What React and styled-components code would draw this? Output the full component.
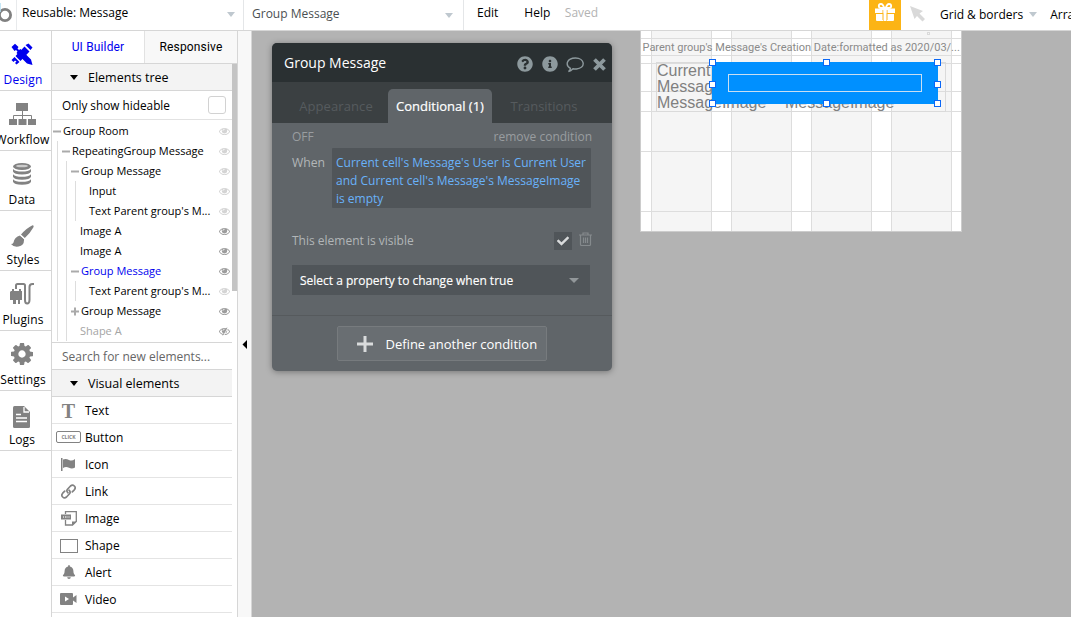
import React from "react";
import styled, { createGlobalStyle, css } from "styled-components";
import { FaBell, FaQuestionCircle, FaInfoCircle, FaCheck } from "react-icons/fa";

const Global = createGlobalStyle`
  * { box-sizing: border-box; }
  body { margin: 0; overflow: hidden; font-family: "Open Sans", sans-serif; font-size: 12px; color: #000; }
  svg { display: block; flex: none; }
`;

const Page = styled.div`
  width: 1071px; height: 617px; display: flex; flex-direction: column;
  background: #fff; overflow: hidden; white-space: nowrap;
`;

/* top bar */
const TopBar = styled.header`
  height: 31px; flex: none; display: flex; border-bottom: 1px solid #d6d6d6; overflow: hidden;
`;
const LogoCell = styled.div`width: 17px; border-right: 1px solid #e8eaec;`;
const Picker = styled.div`
  width: ${(p) => p.$w}px; height: 30px; display: flex; align-items: center; justify-content: space-between;
  padding: 0 ${(p) => p.$pr}px 0 ${(p) => p.$pl}px; border-right: 1px solid #e4e6e8;
  color: ${(p) => p.$color || "#000"};
  line-height: 26px;
  span { margin-top: ${(p) => p.$top}px; }
`;
const Caret = styled.i`
  width: 0; height: 0; margin-top: ${(p) => p.$mt || 0}px; margin-left: ${(p) => p.$ml || 0}px;
  border: ${(p) => p.$s || 4}px solid transparent; border-bottom: 0;
  border-top: ${(p) => p.$h || 5}px solid ${(p) => p.$c || "#bfc8cf"};
`;
const MenuItem = styled.span`
  margin-left: ${(p) => p.$ml}px; line-height: ${(p) => p.$lh || 26}px; color: ${(p) => p.$c || "#000"};
`;
const GiftBox = styled.div`
  width: 32px; height: 30px; margin-left: auto; padding: 3px 0 0 5px; background: #fcb415;
`;
const RightTools = styled.div`
  width: 170px; display: flex; align-items: center; height: 30px;
`;
const Pointer = styled.svg`margin: -2px 0 0 9px;`;

const Main = styled.div`flex: 1; min-height: 0; display: flex;`;

/* left rail */
const Rail = styled.nav`
  width: 52px; flex: none; border-right: 1px solid #d6d6d6; overflow: hidden;
`;
const RailItem = styled.div`
  height: 60px; border-bottom: 1px solid #d6d6d6;
  display: flex; flex-direction: column; align-items: center;
  padding: ${(p) => p.$pt}px 7px 0 0; color: ${(p) => (p.$on ? "#00e" : "#000")};
`;
const RailIcon = styled.div`height: ${(p) => p.$h}px; color: ${(p) => (p.$on ? "#00e" : "#828282")};`;
const RailLabel = styled.span`line-height: 17px; font-size: 12px; letter-spacing: .12px; padding-left: ${(p) => p.$dx || 0}px;`;

/* side panel */
const Side = styled.aside`
  width: 186px; flex: none; border-right: 1px solid #d6d6d6; display: flex; flex-direction: column;
`;
const Tabs = styled.div`display: flex; height: 33px; flex: none; border-bottom: 1px solid #d6d6d6;`;
const Tab = styled.div`
  width: ${(p) => p.$w}px; text-align: center; font: 12px/32px Roboto, sans-serif; letter-spacing: .15px;
  color: ${(p) => (p.$on ? "#00e" : "#000")}; background: ${(p) => (p.$on ? "#fff" : "#f8f8f8")};
  ${(p) => !p.$on && css`border-left: 1px solid #e2e2e2;`}
`;
const Scrollable = styled.div`display: flex; height: 278px; flex: none;`;
const List = styled.div`width: 180px; flex: none;`;
const Thumb = styled.div`width: 5px; height: 227px; background: #c4c4c4;`;
const SectionHead = styled.div`
  height: 27px; background: #f3f3f3; border-bottom: 1px solid #d6d6d6; display: flex; align-items: center;
  padding-left: 18px; gap: 10px; font-size: 12.5px; line-height: 17px;
`;
const HideRow = styled.div`
  height: 29px; border-bottom: 1px solid #e2e2e2; display: flex; align-items: center; justify-content: space-between;
  padding: 0 6px 0 10px; font-size: 11.8px; line-height: 29px;
`;
const Checkbox = styled.i`width: 18px; height: 18px; border: 1px solid #d2d2d2; border-radius: 3px;`;
const Tree = styled.div`
  height: 222px; padding-top: 1px; overflow: hidden; font-size: 11px;
`;
const Node = styled.div`
  height: 20px; display: flex; align-items: center; color: ${(p) => p.$c || "#000"};
`;
const Guides = styled.div`display: flex; height: 20px; flex: none; padding-left: 5px;`;
const Guide = styled.i`
  width: 9px; height: 20px; border-left: 1px solid #ddd;
`;
const Toggle = styled.svg`margin-left: -4px; margin-right: 1px;`;
const NodeText = styled.span`flex: 1; line-height: 20px; padding-left: ${(p) => (p.$leaf ? 5 : 0)}px;`;
const Eye = styled.span`width: 11px; margin-right: 2px; color: ${(p) => (p.$on ? "#9c9c9c" : "#d4d4d4")};`;
const Search = styled.div`
  height: 28px; flex: none; width: 180px; border: solid #d6d6d6; border-width: 1px 0; padding-left: 10px; line-height: 28px; color: #666; font-size: 12px;
`;
const ElementRow = styled.div`
  height: 27px; border-bottom: 1px solid #e4e4e4; display: flex; align-items: center; line-height: 26px; font-size: 12px;
`;
const ElIcon = styled.div`width: 33px; display: flex; justify-content: center; color: #828282;`;

const Gutter = styled.div`
  width: 14px; flex: none; background: #f8f8f8; border-right: 1px solid #d6d6d6; padding: 309px 0 0 4px;
`;

/* canvas */
const Canvas = styled.main`flex: 1; background: #b3b3b3; position: relative; overflow: hidden;`;
const Inspector = styled.section`
  position: absolute; left: 20px; top: 12px; width: 340px; height: 328px; border-radius: 5px;
  background: #606569; overflow: hidden; box-shadow: 0 1px 6px rgba(0,0,0,.35);
  display: flex; flex-direction: column;
`;
const InspHead = styled.div`
  height: 39px; background: #2a3032; color: #fff; display: flex; align-items: center; padding: 0 6px 0 12px; font-size: 14px;
  flex: none;
`;
const InspTitle = styled.span`flex: 1; line-height: 38px; font-weight: 500;`;
const HeadIcons = styled.div`display: flex; align-items: center; color: #8d999d; padding-top: 3px;`;
const HeadIcon = styled.span`margin-right: ${(p) => p.$mr}px;`;
const InspTabs = styled.div`height: 41px; flex: none; background: #3b4042; display: flex; align-items: flex-end; padding-left: 12px;`;
const InspTab = styled.div`
  width: 104px; height: 34px; text-align: center; border-radius: 5px 5px 0 0; font-size: 13px; line-height: 34px;
  color: #565b5e; letter-spacing: ${(p) => p.$ls || 0}px;
  ${(p) => p.$on && css`background: #606569; color: #fff; font-weight: 500; -webkit-text-stroke: .2px #fff;`}
`;
const InspBody = styled.div`height: 193px; padding: 0 21px 0 20px; color: #b2b6b8; border-bottom: 1px solid #565a5d;`;
const Between = styled.div`display: flex; justify-content: space-between; align-items: center; height: 27px; margin-right: -1px; color: #999da0; font-size: 12px;`;
const WhenRow = styled.div`display: flex; margin-top: -2px; font-size: 12px;`;
const When = styled.span`width: 40px; line-height: 30px; font-size: 12.2px;`;
const Expression = styled.div`
  width: 259px; height: 60px; background: #505559; color: #69b2fa; line-height: 18px; padding: 6px 4px; border-radius: 1px;
`;
const PropRow = styled.div`
  display: flex; align-items: center; height: 18px; margin-top: 24px; font-size: 12px;
  span { flex: 1; margin-top: -2px; }
`;
const Check = styled.i`width: 18px; height: 18px; background: #505559; color: #d8dadb; display: flex; align-items: center; justify-content: center; margin-right: 7px;`;
const Trash = styled.svg`margin: -3px -1px 0 0;`;
const Select = styled.div`
  width: 298px; height: 30px; margin-top: 15px; background: #505559; color: #fff; display: flex; align-items: center; justify-content: space-between;
  padding: 0 11px 0 8px; font-size: 12px; font-weight: 500; -webkit-text-stroke: .15px #fff;
`;
const Define = styled.button`
  width: 210px; height: 35px; margin: 10px 0 0 65px; padding: 0 0 0 18.5px; background: #696e72; border: 1px solid #777b7e; border-radius: 2px;
  color: #fff; font: 500 13px "Open Sans", sans-serif; display: flex; align-items: center; gap: 13px;
`;

const Artboard = styled.section`
  position: absolute; left: 388px; top: 0; width: 322px; height: 201px; background: #fff; border: 1px solid #ccc; border-top: 0; overflow: hidden;
`;
const Column = styled.i`
  position: absolute; left: ${(p) => p.$x}px; top: 0; width: 61px; height: 201px; background: #f5f5f5; border: solid #ddd; border-width: 0 1px;
`;
const HLine = styled.i`
  position: absolute; left: 0; width: 322px; height: 1px; top: ${(p) => p.$y}px; background: #ddd;
`;
const Outline = styled.i`
  position: absolute; left: ${(p) => p.$x}px; top: ${(p) => p.$y}px; width: ${(p) => p.$w}px; height: ${(p) => p.$h}px; border: 1px solid ${(p) => p.$c || "#dadada"};
`;
const DateText = styled.div`
  position: absolute; left: 1.5px; top: 9px; line-height: 15px; font-family: Roboto, sans-serif; font-size: 11px; color: #8a8a8a;
`;
const CellText = styled.div`
  position: absolute; left: ${(p) => p.$x}px; top: ${(p) => p.$y}px; white-space: pre-line; font: 16px/16px "Liberation Sans", Arial, sans-serif; color: #808080;
`;
const Bubble = styled.div`
  position: absolute; left: 71px; top: 31px; width: 226px; height: 42px; border-radius: 8px; background: #0090ff;
`;
const Frame = styled.i`
  position: absolute; left: 71px; top: 31px; width: 226px; height: 42px; border: 1px solid #0090ff;
`;
const Handle = styled.i`
  position: absolute; left: ${(p) => p.$x - 3}px; top: ${(p) => p.$y - 3}px; width: 7px; height: 7px; background: #fff; border: 1px solid #0b67f5;
`;

const DesignIcon = () => (
  <svg width="22" height="22" viewBox="0 0 22 22" fill="currentColor">
    <path d="M.5 4 4 .8 7.500 4 6.500 5.500 8 7l1.500-1L20 16.500 21.500 22 16 20.500 5.500 10l1-1.500L5 7 3.500 8z" />
    <path d="M17.500.5 21.500 4.500 19.500 7l-5-5zM13.500 3.500l5 5-9 9.500-5-5zM3.500 14 8.500 19 5.500 21.500 4 20l1.500-1.500-1.500-1L2.500 19 .5 17z" />
  </svg>
);
const FlowIcon = () => (
  <svg width="28" height="24" viewBox="0 0 28 24" fill="currentColor">
    <path d="M8 1h12v8H8zM1 17h8v6H1zM10.500 17h8v6h-8zM20 17h8v6h-8z" />
    <path d="M14.500 9v8M5.500 17v-3.500h18V17" fill="none" stroke="currentColor" strokeWidth="1" />
  </svg>
);
const DataIcon = () => (
  <svg width="18" height="22" viewBox="0 0 18 22" fill="currentColor">
    <ellipse cx="9" cy="3.500" rx="9" ry="3.500" />
    <ellipse cx="9" cy="3" rx="6" ry="1.300" fill="#ccc" />
    <path d="M0 6q2.500 2.600 9 2.600T18 6v2.500q-1 3-9 3t-9-3zM0 11.200q2.500 2.600 9 2.600t9-2.600v2.500q-1 3-9 3t-9-3zM0 16.200q2.500 2.600 9 2.600t9-2.600v2.500q-1 3-9 3t-9-3z" />
  </svg>
);
const BrushIcon = () => (
  <svg width="23" height="22" viewBox="0 0 23 22" fill="currentColor">
    <path d="M21.500.2q1.800.3.800 2.300-3 5.500-8.500 10.500L10 9.500Q15.500 3 21.500.2zM9 10.500l4 3.500q.5 6.500-5.500 7.500-5 .8-7.500-2.500 2 0 2.500-1.500Q3.500 12 9 10.500z" />
    <path d="m8.800 10 4.700 4.200" stroke="#fff" strokeWidth=".8" />
  </svg>
);
const GearIcon = () => (
  <svg width="22" height="22" viewBox="0 128 1536 1536" fill="currentColor">
    <path d="M1024 896q0-106-75-181t-181-75-181 75-75 181 75 181 181 75 181-75 75-181zm512-109v222q0 12-8 23t-20 13l-185 28q-19 54-39 91 35 50 107 138 10 12 10 25t-9 23q-27 37-99 108t-94 71q-12 0-26-9l-138-108q-44 23-91 38-16 136-29 186-7 28-36 28h-222q-14 0-24.500-8.500t-11.500-21.500l-28-184q-49-16-90-37l-141 107q-10 9-25 9-14 0-25-11-126-114-165-168-7-10-7-23 0-12 8-23 15-21 51-66.500t54-70.500q-27-50-41-99l-183-27q-13-2-21-12.500t-8-23.500v-222q0-12 8-23t19-13l186-28q14-46 39-92-40-57-107-138-10-12-10-24 0-10 9-23 26-36 98.500-107.500t94.500-71.500q13 0 26 10l138 107q44-23 91-38 16-136 29-186 7-28 36-28h222q14 0 24.500 8.500t11.500 21.500l28 184q49 16 90 37l142-107q9-9 24-9 13 0 25 10 129 119 165 170 7 8 7 22 0 12-8 23-15 21-51 66.500t-54 70.500q26 50 41 98l183 28q13 2 21 12.500t8 23.500z" />
  </svg>
);
const EyeIcon = ({ off }) => (
  <svg width="11" height="11" viewBox="0 64 1792 1792" fill="currentColor">
    <path d="M1664 960q-152-236-381-353 61 104 61 225 0 185-131.500 316.500t-316.500 131.500-316.500-131.500-131.500-316.500q0-121 61-225-229 117-381 353 133 205 333.500 326.500t434.500 121.500 434.500-121.500 333.500-326.500zm-720-384q0-20-14-34t-34-14q-125 0-214.500 89.500t-89.500 214.500q0 20 14 34t34 14 34-14 14-34q0-86 61-147t147-61q20 0 34-14t14-34zm848 384q0 34-20 69-140 230-376.500 368.500t-499.500 138.500-499.500-139-376.500-368q-20-35-20-69t20-69q140-229 376.500-368t499.500-139 499.500 139 376.500 368q20 35 20 69z" />
    {off && <path d="M1300 330 620 1590" stroke="currentColor" strokeWidth="150" />}
    {off && <path d="M1430 400 750 1660" stroke="#fff" strokeWidth="130" />}
  </svg>
);
const PluginIcon = () => (
  <svg width="26" height="24" viewBox="0 0 26 24" fill="currentColor">
    <path d="M2 9h1V7h2v2h5V7h2v2h1v9h-2v4H9v-4H7v4H4v-4H1v-8z" />
    <path d="M7 7V3.500Q7 2 8.500 2h6Q16 2 16 3.500V18q0 3.500 2.200 3.500T20.500 18V5q0-3 3-3h1.500" fill="none" stroke="currentColor" strokeWidth="2" />
  </svg>
);
const DocIcon = () => (
  <svg width="18" height="23" viewBox="0 0 18 23">
    <path d="M0 1.500Q0 0 1.500 0H11l6 6v14.500q0 1.500-1.500 1.500h-14Q0 22 0 20.500z" fill="currentColor" />
    <path d="M11 1v5h5M3 8.500h5M3 12h11M3 15.500h11" stroke="#fff" fill="none" strokeWidth="1.300" />
  </svg>
);
const FlagIcon = () => (
  <svg width="15" height="13" viewBox="0 0 15 13" fill="currentColor">
    <path d="M0 0h1.500v13H0zM2 1.500q3-1 6 .5t6-1v8.500q-3 2-6 .3t-6 .2z" />
  </svg>
);
const LinkIcon = () => (
  <svg width="15" height="15" viewBox="0 0 15 15" fill="none" stroke="currentColor" strokeWidth="1.700" strokeLinecap="round">
    <path d="M7 8.800Q5 7 6.500 5.200L9.500 2q2-1.800 3.800 0t0 3.800l-2 2" />
    <path d="M8 6.200Q10 8 8.500 9.800L5.500 13q-2 1.800-3.800 0t0-3.800l2-2" />
  </svg>
);
const ImageIcon = () => (
  <svg width="16" height="15" viewBox="0 0 16 15">
    <path d="M4.500 3V.7h10.800v9.800L11.500 14h-7V9" fill="none" stroke="currentColor" strokeWidth="1.300" />
    <path d="M0 3.500h10v5H0zM11 14.500V10.500h4.500z" fill="currentColor" />
    <path d="M2.500 5v2M4.500 5v2M6 5v2M8 5v2" stroke="#ddd" strokeWidth=".8" />
  </svg>
);
const VideoIcon = () => (
  <svg width="17" height="12" viewBox="0 0 17 12">
    <path d="M0 1Q0 0 1 0h11q1 0 1 1v3.500L16.500 2v8L13 7.500V11q0 1-1 1H1q-1 0-1-1z" fill="currentColor" />
    <path d="M5 3.500 9 6 5 8.500z" fill="#fff" />
  </svg>
);
const GiftIcon = () => (
  <svg width="22" height="19" viewBox="0 0 22 19" fill="#fff">
    <path d="M1 5.500h20v4.500H1zM2 11h7v7H3q-1 0-1-1zM13 11h7v6q0 1-1 1h-6z" />
    <path d="M10.500 5.500Q9 1 7 1 4.800 1 4.800 3T7 5h8q2.200 0 2.200-2T15 1q-2 0-3.500 4.500" fill="none" stroke="#fff" strokeWidth="1.800" />
    <path d="M9 7v10M13 7v10" stroke="#fcb415" strokeWidth="1" />
    <path d="M9.500 6.500h3V18h-3z" />
  </svg>
);
const ClickBadge = styled.span`
  width: 25px; height: 12px; border: 1px solid #828282; border-radius: 2px; font-size: 5px; font-weight: 700; line-height: 10px; text-align: center;
`;
const Letter = styled.span`font: bold 20px/24px "Liberation Serif", serif; padding-top: 2px;`;
const ShapeBox = styled.i`width: 18px; height: 14px; border: 1px solid #828282; margin-top: 2px;`;
const ElLabel = styled.span`line-height: 25px; padding-top: 1px;`;

const rail = [
  ["Design", <DesignIcon />, 1, 12, 2],
  ["Workflow", <FlowIcon />, 0, 11, 1],
  ["Data", <DataIcon />, 0, 12, 0],
  ["Styles", <BrushIcon />, 0, 14, 2],
  ["Plugins", <PluginIcon />, 0, 11, 2],
  ["Settings", <GearIcon />, 0, 12, 2],
  ["Logs", <DocIcon />, 0, 15, -2],
];
/* depth, label, toggle sign, eye state, colour */
const nodes = [
  [0, "Group Room", "-", 0],
  [1, "RepeatingGroup Message", "-", 0],
  [2, "Group Message", "-", 0],
  [3, "Input", "", 0],
  [3, "Text Parent group's M...", "", 0],
  [2, "Image A", "", 1],
  [2, "Image A", "", 1],
  [2, "Group Message", "-", 1, "#00e"],
  [3, "Text Parent group's M...", "", 0],
  [2, "Group Message", "+", 1],
  [2, "Shape A", "", 2, "#a5a5a5"],
];
const elements = [
  ["Text", <Letter>T</Letter>],
  ["Button", <ClickBadge>CLICK</ClickBadge>],
  ["Icon", <FlagIcon />],
  ["Link", <LinkIcon />],
  ["Image", <ImageIcon />],
  ["Shape", <ShapeBox />],
  ["Alert", <FaBell size={14} />],
  ["Video", <VideoIcon />],
];

export default function App() {
  return (
    <Page>
      <Global />
      <TopBar>
        <LogoCell>
          <svg width="13" height="30" viewBox="0 0 13 30">
            <circle cx="5" cy="15" r="5.600" fill="none" stroke="#808080" strokeWidth="2.800" />
            <path d="M0 3v9" stroke="#b5e0f5" strokeWidth="1.500" />
          </svg>
        </LogoCell>
        <Picker $w={227} $pl={5} $pr={8} $top={-4}><span>Reusable: Message</span><Caret $mt={-2} /></Picker>
        <Picker $w={220} $pl={8} $pr={10} $top={-2} $color="#4b4f52"><span>Group Message</span><Caret /></Picker>
        <MenuItem $ml={13}>Edit</MenuItem>
        <MenuItem $ml={26}>Help</MenuItem>
        <MenuItem $ml={14.5} $c="#b3b3b3">Saved</MenuItem>
        <GiftBox><GiftIcon /></GiftBox>
        <RightTools>
          <Pointer width="16" height="16" viewBox="0 0 16 16">
            <path d="M0 0 13 5 9.500 7.500 15 13 12.500 15.500 7 10 4.500 13z" fill="#d9d9d9" />
          </Pointer>
          <MenuItem $ml={14} $lh={28}>Grid &amp; borders</MenuItem>
          <Caret $ml={6} $mt={-1} />
          <MenuItem $ml={13} $lh={28}>Arrange</MenuItem>
        </RightTools>
      </TopBar>
      <Main>
        <Rail>
          {rail.map(([label, icon, on, pt, dx]) => (
            <RailItem key={label} $on={on} $pt={pt}>
              <RailIcon $on={on} $h={40 - pt}>{icon}</RailIcon>
              <RailLabel $dx={dx}>{label}</RailLabel>
            </RailItem>
          ))}
        </Rail>
        <Side>
          <Tabs><Tab $on $w={92}>UI Builder</Tab><Tab $w={93}>Responsive</Tab></Tabs>
          <Scrollable>
            <List>
              <SectionHead><Caret $c="#000" />Elements tree</SectionHead>
              <HideRow>Only show hideable<Checkbox /></HideRow>
              <Tree>
                {nodes.map(([depth, label, sign, eye, color], i) => (
                  <Node key={i} $c={color}>
                    <Guides>
                      {Array.from({ length: depth }, (_, d) => <Guide key={d} />)}
                    </Guides>
                    {sign && (
                      <Toggle width="9" height="9" viewBox="0 0 9 9">
                        <path d={sign === "+" ? "M0 4.500h8M4 .5v8" : "M0 4.500h8"} stroke="#aaa" strokeWidth="2" />
                      </Toggle>
                    )}
                    <NodeText $leaf={!sign}>{label}</NodeText>
                    <Eye $on={eye}><EyeIcon off={eye === 2} /></Eye>
                  </Node>
                ))}
              </Tree>
            </List>
            <Thumb />
          </Scrollable>
          <Search>Search for new elements...</Search>
          <List>
            <SectionHead><Caret $c="#000" />Visual elements</SectionHead>
            {elements.map(([label, icon]) => (
              <ElementRow key={label}><ElIcon>{icon}</ElIcon><ElLabel>{label}</ElLabel></ElementRow>
            ))}
          </List>
        </Side>
        <Gutter>
          <svg width="6" height="10" viewBox="0 0 6 10"><path d="M5 0v9L.5 4.500z" fill="#000" /></svg>
        </Gutter>
        <Canvas>
          <Inspector>
            <InspHead>
              <InspTitle>Group Message</InspTitle>
              <HeadIcons>
                <HeadIcon $mr={9}><FaQuestionCircle size={16} /></HeadIcon>
                <HeadIcon $mr={8}><FaInfoCircle size={16} /></HeadIcon>
                <HeadIcon $mr={8.5}>
                  <svg width="19" height="17" viewBox="0 0 19 17" fill="none" stroke="currentColor" strokeWidth="1.400">
                    <path d="M4.500 12.300C-1 9.500.5 2 9.500 2s11 9.500 1 11q-2 .2-3.500-.2Q5 15 2.500 15.500 4.500 14 4.500 12.300z" />
                  </svg>
                </HeadIcon>
                <svg width="13" height="13" viewBox="0 0 13 13"><path d="m1.500 1.500 10 10m0-10-10 10" stroke="currentColor" strokeWidth="3.800" /></svg>
              </HeadIcons>
            </InspHead>
            <InspTabs>
              <InspTab $ls={0.1}>Appearance</InspTab>
              <InspTab $on>Conditional (1)</InspTab>
              <InspTab>Transitions</InspTab>
            </InspTabs>
            <InspBody>
              <Between><span>OFF</span><span>remove condition</span></Between>
              <WhenRow>
                <When>When</When>
                <Expression>
                  Current cell's Message's User is Current User<br />
                  and Current cell's Message's MessageImage<br />
                  is empty
                </Expression>
              </WhenRow>
              <PropRow>
                <span>This element is visible</span>
                <Check><FaCheck size={12} /></Check>
                <Trash width="13" height="15" viewBox="0 0 13 15" fill="none" stroke="#858a8d" strokeWidth="1.200">
                  <path d="M0 3h13M4 3V1h5v2M1.500 3v9.500q0 1 1 1h8q1 0 1-1V3M4.500 5.500v5.500M6.500 5.500v5.500M8.500 5.500v5.500" />
                </Trash>
              </PropRow>
              <Select>Select a property to change when true<Caret $s={5} $h={5} $c="#92979a" /></Select>
            </InspBody>
            <Define>
              <svg width="16" height="16" viewBox="0 0 16 16"><path d="M8 0v16M0 8h16" stroke="#d9dbdc" strokeWidth="3" /></svg>
              Define another condition
            </Define>
          </Inspector>
          <Artboard>
            {[10, 90, 170, 250].map((x) => <Column key={x} $x={x} />)}
            {[7, 24, 32, 60, 80, 120, 180].map((y) => <HLine key={y} $y={y} />)}
            <Outline $x={15} $y={31} $w={290} $h={50} />
            <Outline $x={286} $y={1} $w={3} $h={3} />
            <DateText>Parent group's Message's Creation Date:formatted as 2020/03/...</DateText>
            <CellText $x={16} $y={32}>{"Current\nMessage\nMessageImage"}</CellText>
            <CellText $x={144} $y={64}>MessageImage</CellText>
            <Bubble />
            <Frame />
            <Outline $x={87} $y={43} $w={194} $h={18} $c="#c9dff2" />
            {[71, 185, 296].map((x) => [31, 53, 72].map((y) => (x === 185 && y === 53 ? null : <Handle key={`${x}-${y}`} $x={x} $y={y} />)))}
          </Artboard>
        </Canvas>
      </Main>
    </Page>
  );
}
